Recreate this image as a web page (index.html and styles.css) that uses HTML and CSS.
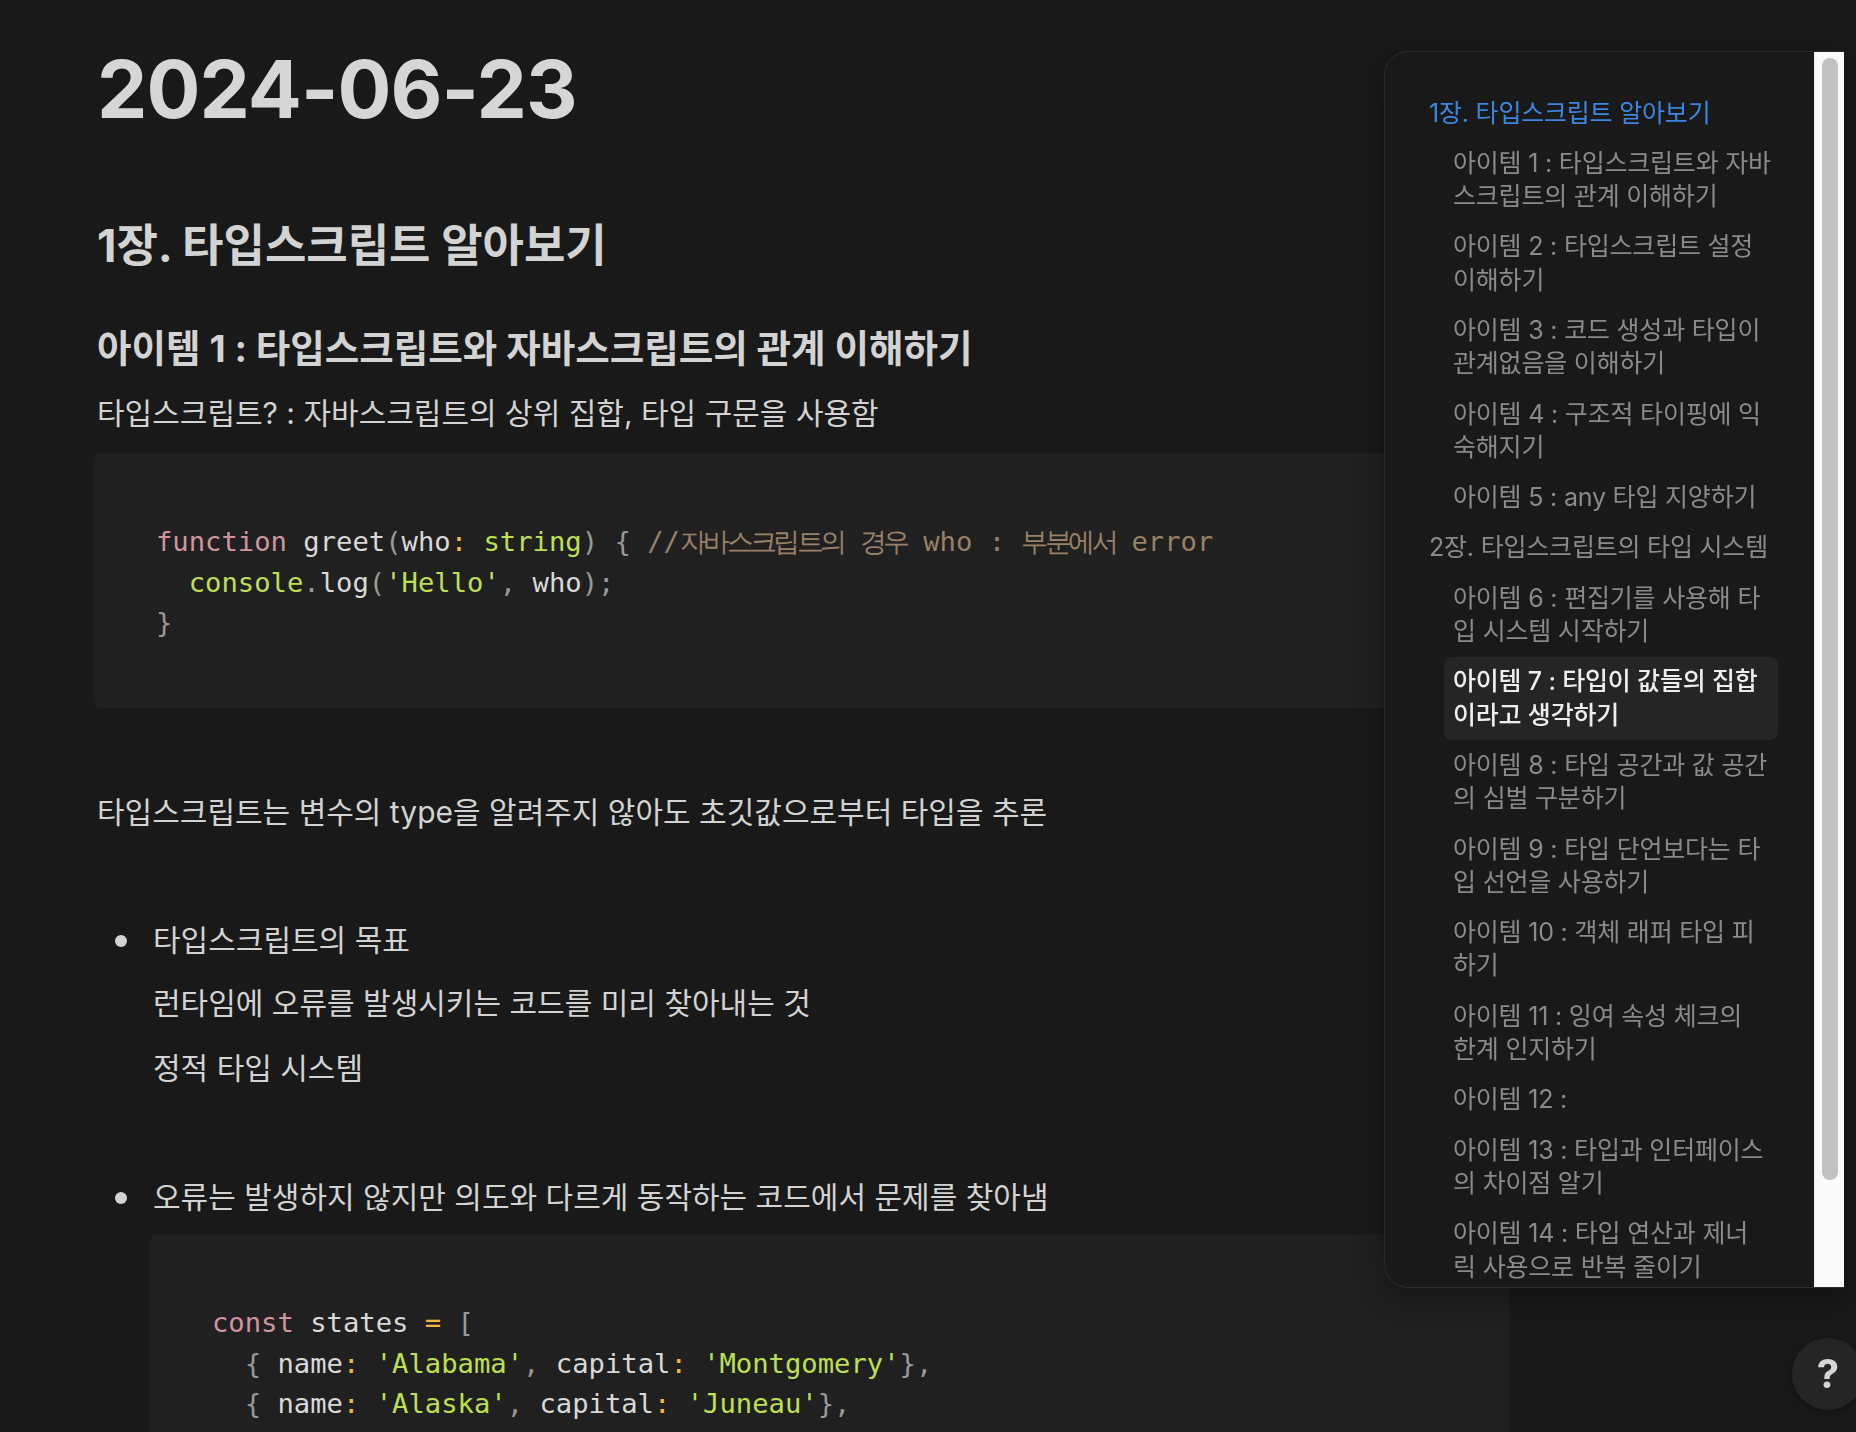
FILE: index.html
```html
<!DOCTYPE html>
<html lang="ko">
<head>
<meta charset="utf-8">
<title>2024-06-23</title>
<link rel="stylesheet" href="styles.css">
</head>
<body>
<main class="page">
  <h1 class="title">2024-06-23</h1>
  <h2 class="chapter">1장. 타입스크립트 알아보기</h2>
  <h3 class="item-heading">아이템 1 : 타입스크립트와 자바스크립트의 관계 이해하기</h3>
  <p class="text p-intro">타입스크립트? : 자바스크립트의 상위 집합, 타입 구문을 사용함</p>
  <pre class="code code-first"><code><span class="kw">function</span> greet<span class="pn">(</span>who<span class="op">:</span> <span class="bi">string</span><span class="pn">)</span> <span class="pn">{</span> <span class="cm">//<span class="ko">자바스크립트의</span> <span class="ko">경우</span> who : <span class="ko">부분에서</span> error</span>
  <span class="bi">console</span><span class="pn">.</span>log<span class="pn">(</span><span class="st">'Hello'</span><span class="pn">,</span> who<span class="pn">);</span>
<span class="pn">}</span></code></pre>
  <p class="text p-infer">타입스크립트는 변수의 type을 알려주지 않아도 초깃값으로부터 타입을 추론</p>
  <ul class="bullets">
    <li class="bullet bullet-first">
      <div class="marker"><span class="dot"></span></div>
      <div class="bullet-body">
        <div class="text">타입스크립트의 목표</div>
        <p class="text child-1">런타임에 오류를 발생시키는 코드를 미리 찾아내는 것</p>
        <p class="text child-2">정적 타입 시스템</p>
      </div>
    </li>
    <li class="bullet bullet-second">
      <div class="marker"><span class="dot"></span></div>
      <div class="bullet-body">
        <div class="text">오류는 발생하지 않지만 의도와 다르게 동작하는 코드에서 문제를 찾아냄</div>
        <pre class="code code-nested"><code><span class="kw">const</span> states <span class="op">=</span> <span class="pn">[</span>
  <span class="pn">{</span> name<span class="op">:</span> <span class="st">'Alabama'</span><span class="pn">,</span> capital<span class="op">:</span> <span class="st">'Montgomery'</span><span class="pn">},</span>
  <span class="pn">{</span> name<span class="op">:</span> <span class="st">'Alaska'</span><span class="pn">,</span> capital<span class="op">:</span> <span class="st">'Juneau'</span><span class="pn">},</span>
  <span class="pn">{</span> name<span class="op">:</span> <span class="st">'Arizona'</span><span class="pn">,</span> capital<span class="op">:</span> <span class="st">'Phoenix'</span><span class="pn">},</span>
<span class="pn">];</span></code></pre>
      </div>
    </li>
  </ul>
</main>

<aside class="toc">
  <nav class="toc-list">
    <a class="toc-entry toc-chapter toc-current">1장. 타입스크립트 알아보기</a>
    <a class="toc-entry toc-item">아이템 1 : 타입스크립트와 자바<br>스크립트의 관계 이해하기</a>
    <a class="toc-entry toc-item">아이템 2 : 타입스크립트 설정<br>이해하기</a>
    <a class="toc-entry toc-item">아이템 3 : 코드 생성과 타입이<br>관계없음을 이해하기</a>
    <a class="toc-entry toc-item">아이템 4 : 구조적 타이핑에 익<br>숙해지기</a>
    <a class="toc-entry toc-item">아이템 5 : any 타입 지양하기</a>
    <a class="toc-entry toc-chapter">2장. 타입스크립트의 타입 시스템</a>
    <a class="toc-entry toc-item">아이템 6 : 편집기를 사용해 타<br>입 시스템 시작하기</a>
    <a class="toc-entry toc-item toc-active">아이템 7 : 타입이 값들의 집합<br>이라고 생각하기</a>
    <a class="toc-entry toc-item">아이템 8 : 타입 공간과 값 공간<br>의 심벌 구분하기</a>
    <a class="toc-entry toc-item">아이템 9 : 타입 단언보다는 타<br>입 선언을 사용하기</a>
    <a class="toc-entry toc-item">아이템 10 : 객체 래퍼 타입 피<br>하기</a>
    <a class="toc-entry toc-item">아이템 11 : 잉여 속성 체크의<br>한계 인지하기</a>
    <a class="toc-entry toc-item">아이템 12 :</a>
    <a class="toc-entry toc-item">아이템 13 : 타입과 인터페이스<br>의 차이점 알기</a>
    <a class="toc-entry toc-item">아이템 14 : 타입 연산과 제너<br>릭 사용으로 반복 줄이기</a>
    <a class="toc-entry toc-item">아이템 15 : 동적 데이터에 인덱<br>스 시그니처 사용하기</a>
  </nav>
  <div class="toc-track"><div class="toc-thumb"></div></div>
</aside>

<button class="help" type="button">?</button>
</body>
</html>
```

FILE: styles.css
```css
* { box-sizing: border-box; }

html, body {
  margin: 0;
  padding: 0;
  height: 1432px;
  overflow: hidden;
  background: #191919;
}

body {
  font-family: "Inter", "Noto Sans CJK KR", sans-serif;
  color: #d3d3d3;
}

.page {
  width: 1509px;
  padding: 41px 0 0 94px;
}

.title {
  margin: 0;
  padding-left: 3px;
  font-family: "Inter", "Noto Sans CJK KR", sans-serif;
  font-weight: 700;
  font-size: 80px;
  line-height: 96px;
  letter-spacing: -0.9px;
  color: #d6d6d6;
}

.chapter {
  margin: 80px 0 0;
  padding-left: 3px;
  font-size: 45px;
  line-height: 58px;
  font-weight: 700;
}

.item-heading {
  margin: 50px 0 0;
  padding-left: 3px;
  font-size: 37.5px;
  line-height: 48px;
  font-weight: 700;
}

.text {
  margin: 0;
  padding-left: 3px;
  font-size: 30px;
  line-height: 45px;
  font-weight: 400;
}

.p-intro { margin-top: 18px; }
.p-infer { margin-top: 82px; }

.code {
  margin: 0;
  padding: 69px 62px 64.5px;
  background: #202020;
  border-radius: 8px;
  font-family: "DejaVu Sans Mono", "Noto Sans CJK KR", monospace;
  font-size: 27.2px;
  line-height: 40.5px;
  color: #d9d9d9;
  white-space: pre;
  overflow: hidden;
}

.code-first { margin-top: 17px; }
.code-nested { margin-top: 14px; }

.kw { color: #d1949e; }
.pn { color: #999999; }
.op { color: #f5b83d; }
.bi, .st { color: #bde052; }
.cm { color: #998066; }
.ko { letter-spacing: -3.6px; }

.bullets {
  margin: 0;
  padding: 0;
  list-style: none;
}

.bullet {
  display: flex;
  align-items: flex-start;
}

.bullet-first { margin-top: 83px; }
.bullet-second { margin-top: 84px; }

.marker {
  flex: 0 0 56px;
  height: 45px;
  display: flex;
  align-items: center;
  padding-left: 21px;
}

.dot {
  width: 12px;
  height: 12px;
  border-radius: 50%;
  background: #d3d3d3;
}

.bullet-body {
  flex: 1;
  min-width: 0;
}

.bullet-body > .text { padding-left: 3px; }

.child-1 { margin-top: 18px; }
.child-2 { margin-top: 20px; }

/* table of contents panel (floats over content) */
.toc {
  position: fixed;
  left: 1384px;
  top: 51px;
  width: 460px;
  height: 1237px;
  display: flex;
  background: #191919;
  border: 1px solid #2a2a2a;
  border-right: none;
  border-radius: 24px 0 0 24px;
  overflow: hidden;
  box-shadow: 0 10px 28px rgba(0, 0, 0, 0.35);
}

.toc-list {
  flex: 1;
  min-width: 0;
  padding: 36px 36px 0 35px;
  overflow: hidden;
  display: flex;
  flex-direction: column;
}

.toc-entry {
  display: block;
  padding: 8.5px 9px;
  border-radius: 8px;
  font-family: "Inter", "Noto Sans CJK KR", sans-serif;
  font-size: 25px;
  line-height: 33.3px;
  letter-spacing: -0.2px;
  color: #8a8a8a;
  white-space: nowrap;
  text-decoration: none;
}

.toc-item { margin-left: 24px; }

.toc-current { color: #3b87e0; }

.toc-active {
  background: #252525;
  color: #eeeeee;
  font-weight: 500;
}

.toc-track {
  flex: 0 0 30px;
  background: #fafafa;
  border-left: 1px solid #ececec;
  padding: 6px 6px 0 7px;
}

.toc-thumb {
  height: 1122px;
  border-radius: 8px;
  background: #c2c2c2;
}

.help {
  position: fixed;
  left: 1792px;
  top: 1338px;
  width: 72px;
  height: 72px;
  padding: 0;
  border: none;
  border-radius: 50%;
  background: #252525;
  color: #d6d6d6;
  font-family: "Inter", sans-serif;
  font-weight: 700;
  font-size: 40px;
  line-height: 72px;
  text-align: center;
  box-shadow: 0 2px 10px rgba(0, 0, 0, 0.3);
}
```
